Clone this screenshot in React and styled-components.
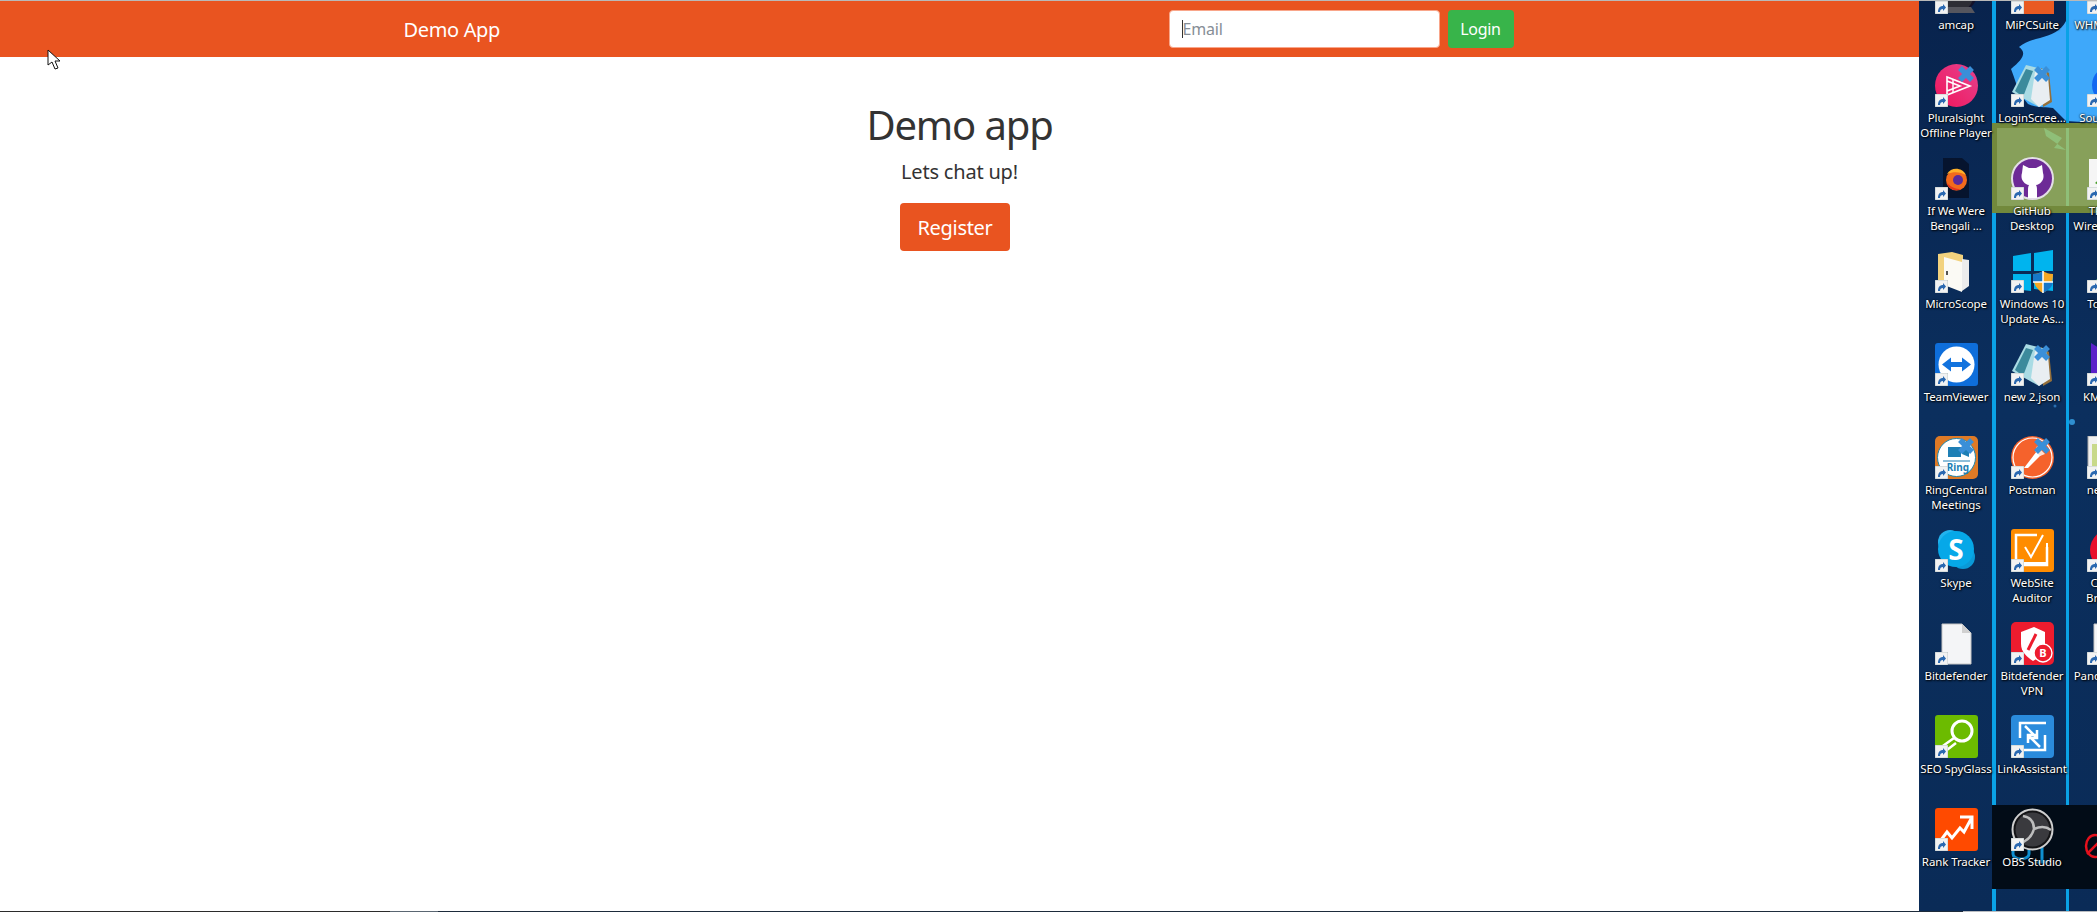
import React from "react";
import styled, { createGlobalStyle } from "styled-components";

const Global = createGlobalStyle`
  html, body { margin: 0; padding: 0; height: 100%; background: #fff; overflow: hidden; }
  * { box-sizing: border-box; }
`;

const Screen = styled.div`
  width: 2097px; height: 912px; display: flex; flex-direction: column; overflow: hidden; position: relative;
  font-family: "Noto Sans", "Open Sans", sans-serif;
`;
const TopEdge = styled.div`height: 1px; flex: none; background: #b9b9b9;`;
const BottomEdge = styled.div`
  height: 1px; flex: none;
  background: linear-gradient(90deg, #2b2b2b 0, #2b2b2b 390px, #5a6672 390px, #5a6672 438px, #1d2b3b 438px, #1d2b3b 1963px, #b9bcc0 1963px);
`;
const Body = styled.div`flex: 1; display: flex; min-height: 0;`;
const Browser = styled.main`flex: 1; min-width: 0; display: flex; flex-direction: column; background: #fff;`;
const NavBar = styled.nav`height: 56px; flex: none; background: #e95420; display: flex; justify-content: center; padding-right: 2px;`;
const NavInner = styled.div`width: 1140px; padding: 0 15px; display: flex; align-items: center; justify-content: space-between;`;
const Brand = styled.span`font-size: 20px; color: #fff; letter-spacing: -0.35px;`;
const LoginForm = styled.form`display: flex; gap: 8px; margin: 0;`;
const EmailField = styled.div`position: relative; width: 271px; height: 38px;`;
const EmailInput = styled.input`
  width: 100%; height: 100%; padding: 0 13px; font: inherit; font-size: 16px; letter-spacing: -0.2px;
  background: #fff; border: 1px solid #f9a68a; border-radius: 4px; outline: none;
  &::placeholder { color: #868e96; opacity: 1; }
`;
const Caret = styled.span`position: absolute; left: 13px; top: 10px; width: 1px; height: 18px; background: #333;`;
const LoginButton = styled.button`
  width: 66px; height: 38px; padding: 0; border: 0; border-radius: 4px; background: #38b44a; color: #fff;
  font: inherit; font-size: 16px; letter-spacing: -0.3px;
`;
const Hero = styled.section`padding-top: 44px; display: flex; flex-direction: column; align-items: center; color: #333;`;
const Title = styled.h1`margin: 0 0 8px; font-size: 40px; line-height: 48px; font-weight: 400; letter-spacing: -1.15px;`;
const Lead = styled.p`margin: 0 0 16px; font-size: 20px; line-height: 30px; letter-spacing: -0.2px;`;
const RegisterButton = styled.button`
  width: 110px; height: 48px; padding: 0; margin-right: 9px; border: 0; border-radius: 4px; background: #e95420; color: #fff;
  font: inherit; font-size: 20px; letter-spacing: -0.3px;
`;
const Pointer = styled.svg`position: absolute; left: 47px; top: 49px; width: 15px; height: 21px;`;

const Desktop = styled.aside`
  width: 178px; flex: none; position: relative; overflow: hidden; background: #0a2a55;
`;
const Wallpaper = styled.svg`position: absolute; inset: 0; width: 178px; height: 910px;`;
const IconGrid = styled.div`
  position: relative; display: grid; grid-auto-flow: column;
  grid-template-columns: repeat(3, 76px); grid-template-rows: repeat(10, 93px); margin: -30px 0 0 -1px;
`;
const Shortcut = styled.div`display: flex; flex-direction: column; align-items: center; width: 76px;`;
const IconBox = styled.div`position: relative; width: 43px; height: 43px; flex: none;`;
const IconSvg = styled.svg`display: block; width: 43px; height: 43px;`;
const Badge = styled.svg`position: absolute; left: 0; bottom: 0; width: 13px; height: 13px;`;
const Sync = styled.svg`position: absolute; right: 3px; top: 1px; width: 18px; height: 18px;`;
const Label = styled.span`
  margin-top: 3px; width: 90px; text-align: center; white-space: pre-line; color: #fff;
  font-size: 11.5px; line-height: 15px; letter-spacing: -0.1px; text-shadow: 1px 1px 2px #000, 0 0 2px #000;
`;

const art = {
  amcap: <><circle cx="21.5" cy="21" r="21" fill="#14122a"/><circle cx="21.5" cy="24" r="17" fill="#2d2d35"/><path d="M7 36h29l4 6H3z" fill="#56565e"/></>,
  mipc: <rect x="0" y="0" width="43" height="43" fill="#e95a22"/>,
  pluralsight: <><defs><linearGradient id="ps" x1="0" y1="1" x2="1" y2="0"><stop offset="0" stopColor="#f0155a"/><stop offset="1" stopColor="#e6428f"/></linearGradient></defs><circle cx="21.5" cy="21.5" r="21.5" fill="url(#ps)"/><path d="M12 13v18l23-9z M12 17v10l13-5z" fill="none" stroke="#fff" strokeWidth="1.6"/><path d="M18 15v14" stroke="#fff" strokeWidth="1.4"/></>,
  firefox: <><path d="M8 1h19l7 6v34H8z" fill="#06142e"/><circle cx="21.5" cy="23" r="10.5" fill="#f26a1c"/><circle cx="23" cy="23" r="5" fill="#5b2a9a"/><path d="M12 17c4-7 15-7 19 1-5-3-12-4-19-1z" fill="#ffb028"/><path d="M12 26c1 6 8 9 14 6-6 0-10-2-14-6z" fill="#e2321e"/></>,
  folder: <><path d="M3 4l14-2 11 3v26L3 35z" fill="#f2d27e"/><path d="M9 7l18 5v30L9 35z" fill="#fbfaf5"/><path d="M27 9l7 1v26l-7 5z" fill="#ececec"/><path d="M11 21h2v4h-2z" fill="#555"/></>,
  notepad: <><path d="M30 4l8 5 3 29-9 5z" fill="#94703c"/><path d="M15 1l20 5 3 28-10 9L1 28z" fill="#a9dbe4"/><path d="M24 8l13 4 2 24-11 7-8-8z" fill="#e9eef2"/><path d="M4 27L15 5l7 2L12 33z" fill="#3c8a9c"/></>,
  github: <><circle cx="21.5" cy="21.5" r="20.5" fill="#6d2a96" stroke="#e3dfe6" strokeWidth="2"/><path d="M12 8l6 3h7l6-3 1 8c2 6-2 11-7 12 1 2 1 3 1 6v7h-9v-7c0-3 0-4 1-6-5-1-9-6-7-12z" fill="#fff"/></>,
  windows: <><path d="M2 6l18-3v18H2zM23 3l19-3v21H23zM2 24h18v17L2 39zM23 24h19v17l-19-2z" fill="#00b4ee"/><path d="M22 24c4 0 7-1 10-3 3 2 6 3 10 3 0 9-3 15-10 19-7-4-10-10-10-19z" fill="#f7a823"/><path d="M32 32h10c-1 5-4 8-10 11zM22 24c4 0 7-1 10-3v11H22z" fill="#1777c9"/><path d="M32 21v22M22 32h20" stroke="#fff" strokeWidth="1.5"/></>,
  teamviewer: <><rect width="43" height="43" rx="3" fill="#0e6edb"/><circle cx="21.5" cy="21.5" r="18" fill="#fff"/><path d="M7 21.5l9-7v4.5h11v-4.5l9 7-9 7V24H16v4.5z" fill="#1273de"/></>,
  ring: <><rect width="43" height="43" rx="5" fill="#de7a26"/><circle cx="21.5" cy="21.5" r="19" fill="#fff" stroke="#1e86ad" strokeWidth="1"/><path d="M13 11h13v10H13zM27 14l7-3v10l-7-3z" fill="#1e7fb5"/><path d="M8 25h27" stroke="#1e7fb5"/><text x="23" y="35" textAnchor="middle" fontSize="10" fontWeight="700" fill="#1e7fb5" fontFamily="Noto Sans">Ring</text></>,
  postman: <><circle cx="21.5" cy="21.5" r="21.5" fill="#f5622c"/><circle cx="21.5" cy="21.5" r="19.5" fill="none" stroke="#fff" strokeWidth="1.2"/><path d="M13 32L26 15l4 4-13 13z" fill="#fff"/><path d="M26 10l8 8-5 2-5-5z" fill="#ffe0d2"/></>,
  skype: <><circle cx="15" cy="13" r="12" fill="#22b3ee"/><circle cx="28" cy="28" r="12" fill="#0a9ad8"/><circle cx="21" cy="20" r="18" fill="#06a8e8"/><text x="21" y="31" textAnchor="middle" fontSize="28" fontWeight="700" fill="#fff" fontFamily="Noto Sans">S</text></>,
  auditor: <><rect width="43" height="43" rx="3" fill="#ff8c00"/><path d="M26 6H5v30h31V18" fill="none" stroke="#fff" strokeWidth="2.5"/><path d="M14 18l6 10 12-22M36 14v20H12" fill="none" stroke="#fff" strokeWidth="2"/></>,
  blank: <><path d="M7 2h20l9 9v31H7z" fill="#f4f5f7" stroke="#c5c5c5"/><path d="M27 2v9h9z" fill="#d0d0d0"/></>,
  vpn: <><rect width="43" height="43" rx="5" fill="#ed1c2e"/><path d="M10 10l13-5 11 5v12c0 8-5 13-12 17-6-4-12-9-12-17z" fill="#fff"/><path d="M25 12l-8 16" stroke="#ed1c2e" strokeWidth="3"/><circle cx="32" cy="31" r="9" fill="#ed1c2e" stroke="#fff" strokeWidth="1.4"/><text x="32" y="35" textAnchor="middle" fontSize="11" fontWeight="700" fill="#fff" fontFamily="Noto Sans">B</text></>,
  seo: <><rect width="43" height="43" rx="3" fill="#6cbb00"/><circle cx="27" cy="16" r="10" fill="none" stroke="#fff" strokeWidth="3"/><path d="M19 23L5 33M21 28L8 38" stroke="#fff" strokeWidth="2.5"/></>,
  link: <><rect width="43" height="43" rx="4" fill="#2a8bdc"/><path d="M9 23V8h26M14 11l12 12m0-8v8h-8M34 20v15H9M29 32L17 20m0 8v-8h8" fill="none" stroke="#fff" strokeWidth="2.5"/></>,
  rank: <><rect width="43" height="43" rx="3" fill="#ff4a00"/><path d="M6 32l6-8 5 6 8-10 4 4 7-13M25 9h12v12" fill="none" stroke="#fff" strokeWidth="3"/></>,
  obs: <><circle cx="21.5" cy="21.5" r="20" fill="#141416" stroke="#cfcfcf" strokeWidth="2"/><circle cx="21.5" cy="21.5" r="17" fill="#3a3a3e"/><path d="M12 8c6 1 11 5 11 13m0 0c7-3 13-2 17 1M23 21c-2 7-7 12-14 14" fill="none" stroke="#bdbdbd" strokeWidth="2.5"/></>,
  wh: <rect x="20" y="30" width="23" height="13" fill="#0a2a55"/>,
  sou: <circle cx="24" cy="21" r="19" fill="#1268f0"/>,
  tp: <><rect x="2" y="2" width="39" height="39" fill="#f5f5f5"/><path d="M8 26l14-12 3 5-12 10z" fill="#4aa02c"/></>,
  to: <><circle cx="24" cy="14" r="14" fill="#2ab5f0"/><path d="M4 43c0-12 8-18 20-18s20 6 20 18z" fill="#4cae4f"/></>,
  km: <path d="M4 0l32 20v23H4z" fill="#5b22c9"/>,
  n: <><rect x="1" y="0" width="40" height="43" fill="#f0f0f0" stroke="#aaa"/><rect x="5" y="8" width="33" height="30" fill="#c8d98a"/><path d="M14 34l8-22 6 22z" fill="#2f7a25"/></>,
  g: <circle cx="24" cy="21" r="21" fill="#e8102c"/>,
};

const items = [
  ["amcap", "amcap"], ["pluralsight", "Pluralsight\nOffline Player", true], ["firefox", "If We Were\nBengali ..."],
  ["folder", "MicroScope"], ["teamviewer", "TeamViewer"], ["ring", "RingCentral\nMeetings", true], ["skype", "Skype"],
  ["blank", "Bitdefender"], ["seo", "SEO SpyGlass"], ["rank", "Rank Tracker"],
  ["mipc", "MiPCSuite"], ["notepad", "LoginScree...", true], ["github", "GitHub\nDesktop"], ["windows", "Windows 10\nUpdate As..."],
  ["notepad", "new 2.json", true], ["postman", "Postman", true], ["auditor", "WebSite\nAuditor"], ["vpn", "Bitdefender\nVPN"],
  ["link", "LinkAssistant"], ["obs", "OBS Studio"],
  ["wh", "WHMCS Tool"], ["sou", "Sourcetree"], ["tp", "TP-Link\nWireless Tool"], ["to", "Toolbox"], ["km", "KMPlayer"], ["n", "new 3.js"],
  ["g", "Comet\nBrowser"], ["blank", "Panda Dome"],
];

function App() {
  return (
    <Screen>
      <Global />
      <TopEdge />
      <Body>
        <Browser>
          <NavBar>
            <NavInner>
              <Brand>Demo App</Brand>
              <LoginForm>
                <EmailField>
                  <EmailInput placeholder="Email" readOnly />
                  <Caret />
                </EmailField>
                <LoginButton type="button">Login</LoginButton>
              </LoginForm>
            </NavInner>
          </NavBar>
          <Hero>
            <Title>Demo app</Title>
            <Lead>Lets chat up!</Lead>
            <RegisterButton type="button">Register</RegisterButton>
          </Hero>
        </Browser>
        <Desktop>
          <Wallpaper viewBox="0 0 178 910">
            <defs>
              <linearGradient id="wp" x1="0" y1="0" x2="0" y2="1">
                <stop offset="0" stopColor="#08234d" />
                <stop offset="0.45" stopColor="#0b2f5e" />
                <stop offset="1" stopColor="#0a2b57" />
              </linearGradient>
            </defs>
            <rect width="178" height="910" fill="url(#wp)" />
            <path d="M147 0L147 20C142 30 132 34 121 37C112 39 105 42 100 46C108 52 104 58 92 68C96 78 98 86 101 93L109 103C118 107 128 106 134 107L147 120L178 122L178 0z" fill="#3ea8fa" />
            <rect x="73" y="0" width="4" height="910" fill="#0aa2e6" />
            <rect x="147" y="0" width="3" height="910" fill="#0aa2e6" />
            <circle cx="153" cy="421" r="3" fill="#2f8fd0" />
            <circle cx="136" cy="405" r="1.5" fill="#2a6fb0" />
            <rect x="73" y="122" width="105" height="90" fill="#72893c" />
            <rect x="78" y="127" width="100" height="78" fill="#87a05a" />
            <path d="M125 127l18 10-8 10 12 2-20-14z M147 127h3v78h-3z" fill="#8fbf78" />
            <rect x="73" y="804" width="105" height="84" fill="#020c17" />
            <path d="M94 845v8a8 5 0 0 0 16 0v-8M123 845v16M117 861h12" fill="none" stroke="#0e8fd0" strokeWidth="3" />
            <ellipse cx="176" cy="845" rx="9" ry="11" fill="none" stroke="#e5101c" strokeWidth="2.5" />
            <path d="M168 853l16-16" stroke="#e5101c" strokeWidth="2.5" />
          </Wallpaper>
          <IconGrid>
            {items.map(([kind, label, sync], i) => (
              <Shortcut key={i}>
                <IconBox>
                  <IconSvg viewBox="0 0 43 43">{art[kind]}</IconSvg>
                  {sync && (
                    <Sync viewBox="0 0 18 18">
                      <path d="M3 3l12 12M15 3L3 15" stroke="#3a8fd8" strokeWidth="5.5" />
                    </Sync>
                  )}
                  <Badge viewBox="0 0 13 13">
                    <rect width="13" height="13" fill="#f2f2f2" stroke="#9aa" strokeWidth="0.6" />
                    <path d="M3 11c0-4 2-6 5-6V3l3 3.5L8 10V8c-2 0-3 1-3 3z" fill="#2a68b0" />
                  </Badge>
                </IconBox>
                <Label>{label}</Label>
              </Shortcut>
            ))}
          </IconGrid>
        </Desktop>
      </Body>
      <BottomEdge />
      <Pointer viewBox="0 0 15 21">
        <path d="M1 1v15l4-3 3 7 3-1-3-7h5z" fill="#fff" stroke="#111" strokeWidth="1" />
      </Pointer>
    </Screen>
  );
}

export default App;
